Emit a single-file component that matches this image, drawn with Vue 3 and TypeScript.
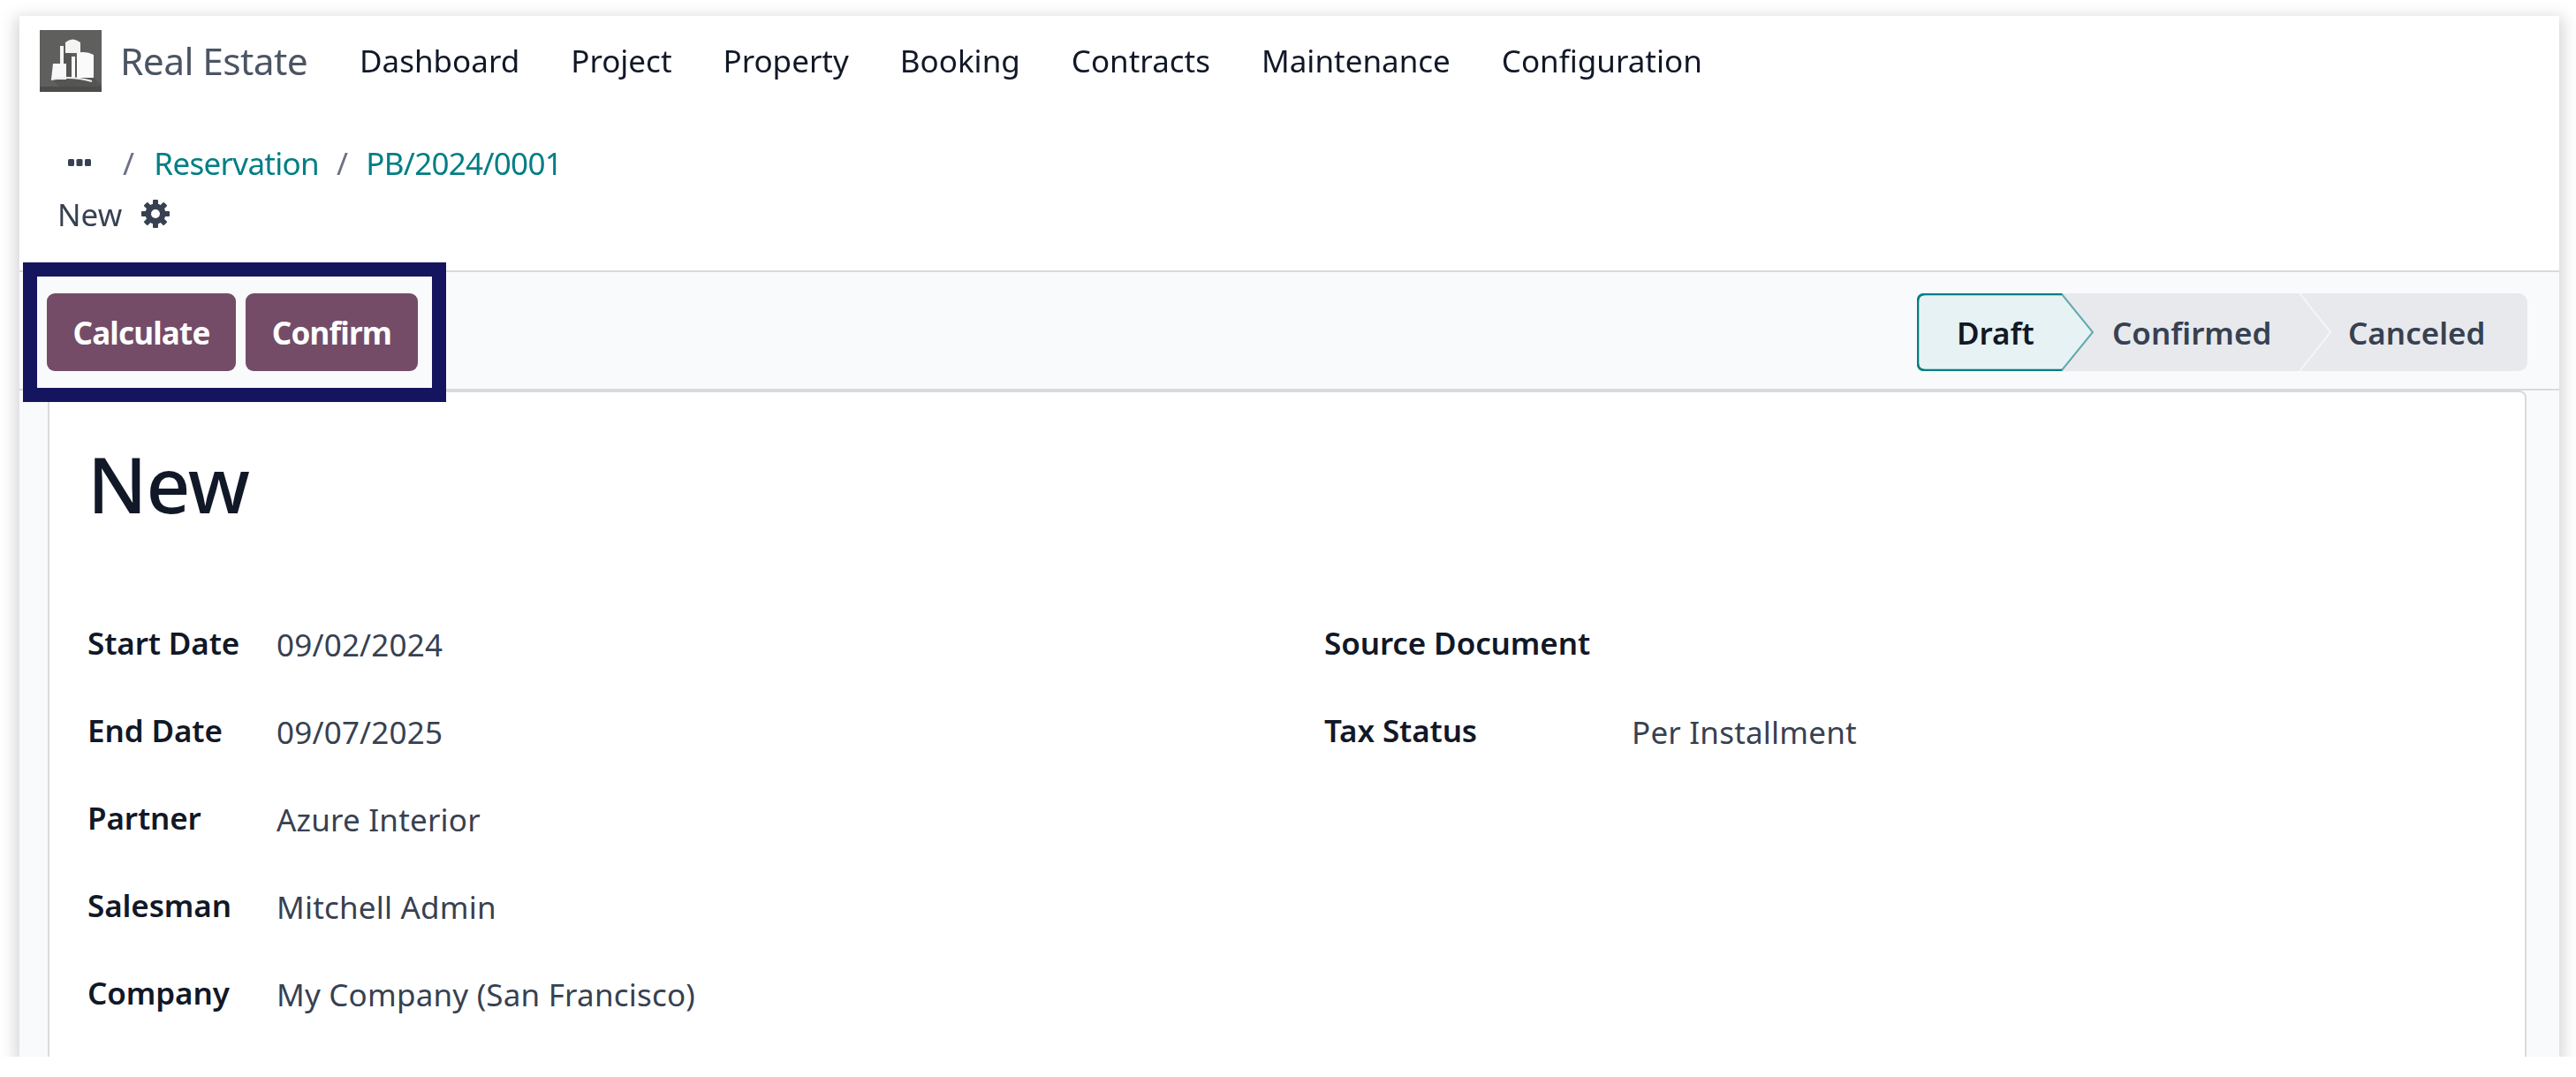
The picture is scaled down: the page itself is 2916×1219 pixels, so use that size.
<script setup lang="ts">
const menus: string[] = ['Dashboard', 'Project', 'Property', 'Booking', 'Contracts', 'Maintenance', 'Configuration']
const leftFields: [string, string][] = [
  ['Start Date', '09/02/2024'],
  ['End Date', '09/07/2025'],
  ['Partner', 'Azure Interior'],
  ['Salesman', 'Mitchell Admin'],
  ['Company', 'My Company (San Francisco)'],
]
const rightFields: [string, string][] = [
  ['Source Document', ''],
  ['Tax Status', 'Per Installment'],
]
const teeth: number[] = [0, 45, 90, 135]
</script>

<template>
  <div class="window">
    <header class="nav">
      <svg class="logo" viewBox="0 0 70 70">
        <rect width="70" height="70" fill="#5f605e" />
        <path d="M14 56 L30 22 L70 62 V70 H28 Z" fill="#555654" />
        <rect y="64" width="70" height="6" fill="#4c4d4b" />
        <path d="M23 18 h4 v26 h-4 Z M29 14 q8 -7 17 0 v12 h-17 Z" fill="#f4f4f4" />
        <path d="M15 38 h15 v18 h-17 Z" fill="#f8f8f8" />
        <path d="M36 30 h4 v24 h-4 Z M42 26 q10 -3 19 2 v26 h-19 Z" fill="#fafafa" />
        <path d="M13 56 q22 -5 46 2" stroke="#eee" stroke-width="2" fill="none" />
      </svg>
      <span class="brand">Real Estate</span>
      <nav class="menu">
        <span v-for="m in menus" :key="m">{{ m }}</span>
      </nav>
    </header>

    <section class="crumbs">
      <div class="crumb-line">
        <svg class="dots" viewBox="0 0 26 8"><rect width="7" height="8" rx="1.5" /><rect x="9.5" width="7" height="8" rx="1.5" /><rect x="19" width="7" height="8" rx="1.5" /></svg>
        <span class="sep first">/</span>
        <a>Reservation</a>
        <span class="sep">/</span>
        <a>PB/2024/0001</a>
      </div>
      <div class="current">
        <span>New</span>
        <svg class="gear" viewBox="0 0 32 32">
          <rect v-for="a in teeth" :key="a" x="13" y="0" width="6" height="32" rx="1" :transform="`rotate(${a} 16 16)`" />
          <circle cx="16" cy="16" r="8" fill="none" stroke="#374151" stroke-width="7" />
          <circle cx="16" cy="16" r="5" fill="#fff" />
        </svg>
      </div>
    </section>

    <section class="panel">
      <div class="actions">
        <button class="calc">Calculate</button>
        <button class="conf">Confirm</button>
      </div>
      <div class="status">
        <div class="step draft">
          <svg class="shape" viewBox="0 0 200 88" preserveAspectRatio="none">
            <path d="M9 1 H164 L199 44 L164 87 H9 Q1 87 1 79 V9 Q1 1 9 1 Z" fill="#e6f2f3" stroke="#5fa9ac" stroke-width="2" />
            <path d="M9 1 H164 M164 87 H9 Q1 87 1 79 V9 Q1 1 9 1" fill="none" stroke="#017e84" stroke-width="2.5" />
          </svg>
          <span>Draft</span>
        </div>
        <div class="step confirmed"><span>Confirmed</span></div>
        <div class="step canceled">
          <svg class="chev" viewBox="0 0 38 88" preserveAspectRatio="none"><path d="M1 0 L36 44 L1 88" fill="none" stroke="#f5f6f8" stroke-width="2" /></svg>
          <span>Canceled</span>
        </div>
      </div>
      <div class="mark"></div>
    </section>

    <main class="content">
      <div class="sheet">
        <h1>New</h1>
        <div class="groups">
          <div class="group left">
            <div v-for="f in leftFields" :key="f[0]" class="row">
              <label>{{ f[0] }}</label><span>{{ f[1] }}</span>
            </div>
          </div>
          <div class="group right">
            <div v-for="f in rightFields" :key="f[0]" class="row">
              <label>{{ f[0] }}</label><span>{{ f[1] }}</span>
            </div>
          </div>
        </div>
      </div>
    </main>
  </div>
</template>

<style>
html, body { margin: 0; background: #fff; }
</style>

<style scoped>
.window {
  box-sizing: border-box;
  width: 2875px;
  height: 1178px;
  margin: 18px 0 0 22px;
  background: #fff;
  box-shadow: 0 6px 16px 5px rgba(60, 60, 70, 0.2);
  display: flex;
  flex-direction: column;
  overflow: hidden;
  font-family: "Noto Sans", "Open Sans", sans-serif;
  color: #374151;
  font-size: 35px;
  filter: blur(0.5px);
}
.nav {
  height: 100px;
  padding: 1px 0 0 23px;
  box-sizing: border-box;
  display: flex;
  align-items: center;
  flex: none;
}
.logo { width: 70px; height: 70px; flex: none; }
.brand { margin-left: 21px; font-size: 42.5px; letter-spacing: -0.6px; color: #4b5563; width: 271px; flex: none; }
.menu { display: flex; gap: 58px; color: #111827; letter-spacing: 0; }
.crumbs { height: 190px; box-sizing: border-box; padding: 41px 0 0 43px; flex: none; border-bottom: 2px solid #d8dadd; }
.crumb-line { display: flex; align-items: center; height: 50px; color: #017e84; letter-spacing: -0.7px; }
.dots { width: 26px; height: 8px; margin-left: 12px; fill: #374151; }
.sep { color: #6b7280; margin: 0 21px 0 20px; }
.sep.first { margin: 0 23px 0 36px; }
.current { display: flex; align-items: center; gap: 22px; margin-top: 10px; height: 46px; color: #374151; }
.gear { width: 32px; height: 32px; fill: #374151; }
.panel {
  position: relative;
  height: 134px;
  flex: none;
  background: #f9fafb;
  display: flex;
  justify-content: space-between;
  align-items: flex-start;
  padding: 24px 36px 0 31px;
  box-sizing: border-box;
  border-bottom: 2px solid #d8dadd;
}
.actions { display: flex; gap: 11px; }
.actions button {
  height: 88px;
  border: 0;
  border-radius: 9px;
  background: #744c68;
  color: #fff;
  font: 700 35px "Noto Sans", sans-serif;
  letter-spacing: -0.8px;
  padding: 0;
}
.calc { width: 214px; }
.conf { width: 195px; }
.status {
  display: flex;
  height: 88px;
  width: 691px;
  background: #e7e9ed;
  border-radius: 10px;
  color: #374151;
  font-weight: 600;
  font-size: 35px;
  letter-spacing: 0;
}
.step { position: relative; display: flex; align-items: center; }
.step span { position: relative; }
.draft { width: 200px; color: #111827; padding-left: 45px; box-sizing: border-box; }
.shape { position: absolute; left: 0; top: 0; width: 200px; height: 88px; }
.confirmed { width: 232px; padding-left: 21px; box-sizing: border-box; }
.canceled { flex: 1; padding-left: 56px; box-sizing: border-box; }
.chev { position: absolute; left: 0; top: 0; width: 38px; height: 88px; }
.mark {
  position: absolute;
  left: 4px;
  top: -11px;
  width: 479px;
  height: 158px;
  box-sizing: border-box;
  border: 16px solid #15155f;
  pointer-events: none;
}
.content { flex: 1; min-height: 0; background: #f9fafb; padding: 0 37px 0 32px; }
.sheet {
  background: #fff;
  border: 2px solid #d8dadd;
  border-bottom: 0;
  border-radius: 8px 8px 0 0;
  height: 100%;
  box-sizing: border-box;
  padding: 0 43px;
}
h1 { margin: 43px 0 0; font-size: 87px; font-weight: 500; line-height: 120px; color: #111827; letter-spacing: -1px; }
.groups { display: grid; grid-template-columns: 1400px 1fr; margin-top: 71px; }
.row { display: flex; align-items: center; height: 99px; }
label { font-weight: 600; color: #111827; letter-spacing: -0.1px; flex: none; }
.row span { letter-spacing: 0.2px; padding-top: 3px; }
.left label { width: 214px; }
.right label { width: 348px; }
</style>
